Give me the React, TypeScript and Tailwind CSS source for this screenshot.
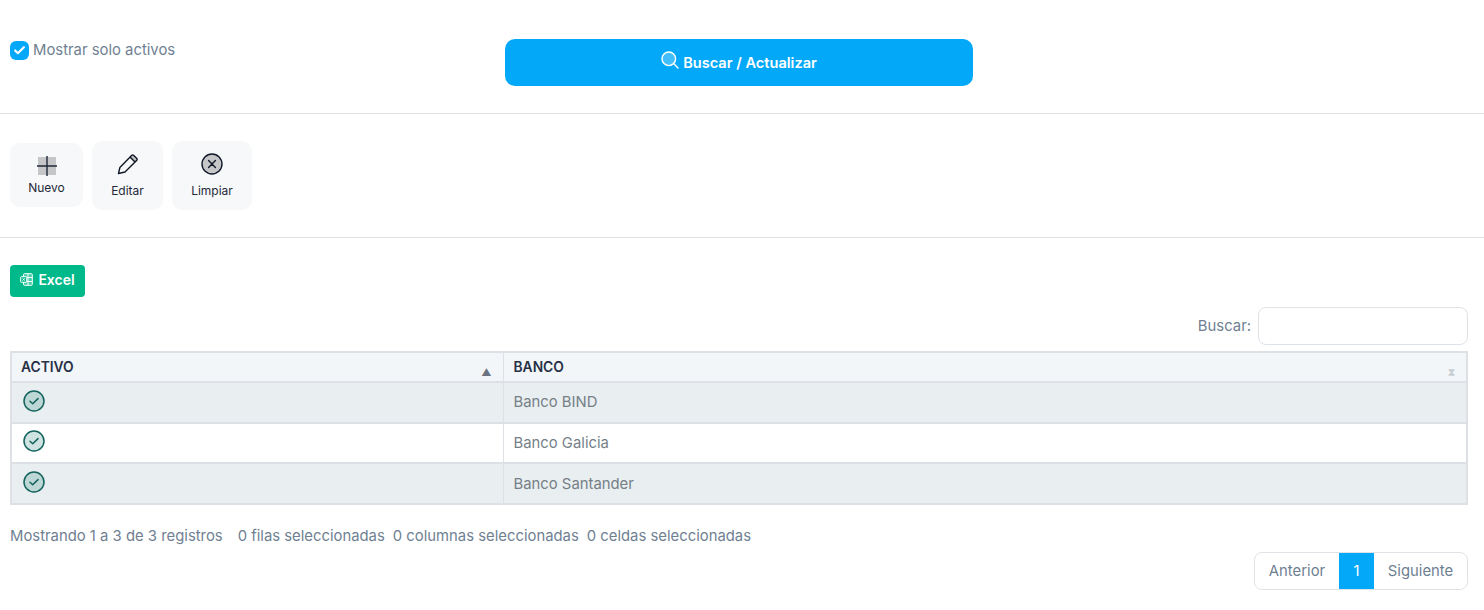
import React from "react"
import { Check } from "lucide-react"

const font = "font-['Inter','Liberation_Sans',sans-serif]"

const rows = ["Banco BIND", "Banco Galicia", "Banco Santander"]

// circulo con check de la columna ACTIVO
const ActiveIcon = () => (
  <svg width="22" height="22" viewBox="0 0 22 22" fill="none">
    <circle cx="11" cy="11" r="10" fill="#0f766e" fillOpacity="0.2" stroke="#14635c" strokeWidth="1.5" />
    <path d="M7 11.2l2.7 2.6L15 8.6" stroke="#14635c" strokeWidth="1.5" strokeLinecap="round" strokeLinejoin="round" />
  </svg>
)

const PlusIcon = () => (
  <svg width="20" height="20" viewBox="0 0 20 20" fill="none">
    <rect x="1" y="1" width="18" height="18" fill="#000" fillOpacity="0.2" />
    <path d="M10 0v20M0 10h20" stroke="#1f2937" strokeWidth="1.4" />
  </svg>
)

const PencilIcon = () => (
  <svg width="22" height="22" viewBox="0 0 22 22" fill="none">
    <path d="M1.5 20.5l1.4-6L14.8 2.2a1.2 1.2 0 0 1 1.7 0l3.3 3.3a1.2 1.2 0 0 1 0 1.7L8 19l-6.500 1.500z" stroke="#111827" strokeWidth="1.4" strokeLinejoin="round" />
    <path d="M13 4l5 5" stroke="#111827" strokeWidth="1.4" />
    <path d="M14.800 2.200a1.200 1.200 0 0 1 1.700 0l3.300 3.300a1.200 1.200 0 0 1 0 1.700L18 9l-5-5z" fill="#000" fillOpacity="0.2" />
  </svg>
)

const CancelIcon = () => (
  <svg width="22" height="22" viewBox="0 0 22 22" fill="none">
    <circle cx="11" cy="11" r="10" fill="#000" fillOpacity="0.2" stroke="#111827" strokeWidth="1.4" />
    <path d="M7.600 7.600l6.800 6.800M14.400 7.600l-6.800 6.800" stroke="#111827" strokeWidth="1.4" strokeLinecap="round" />
  </svg>
)

const SearchIcon = () => (
  <svg width="18" height="18" viewBox="0 0 18 18" fill="none">
    <circle cx="7.800" cy="7.800" r="6.800" fill="#fff" fillOpacity="0.25" stroke="#fff" strokeWidth="1.400" />
    <path d="M12.800 12.800L17 17" stroke="#fff" strokeWidth="1.400" strokeLinecap="round" />
  </svg>
)

const ExcelIcon = () => (
  <svg width="13" height="13" viewBox="0 0 13 13" fill="none">
    <rect x="3.500" y="0.700" width="8.800" height="11.600" rx="1" fill="#fff" fillOpacity="0.25" stroke="#fff" strokeWidth="1" />
    <path d="M3.500 4.500h8.800M3.500 8.500h8.800M8 0.700v11.600" stroke="#fff" strokeWidth="1" />
    <rect x="0.700" y="3.700" width="6" height="5.600" rx="0.600" fill="#00b98a" stroke="#fff" strokeWidth="1" />
    <path d="M2.600 5.300l2.200 2.400M4.800 5.300L2.600 7.700" stroke="#fff" strokeWidth="0.900" />
  </svg>
)

const ToolButton = ({ label, icon, className }: { label: string; icon: React.ReactNode; className: string }) => (
  <button className={`flex flex-col items-center rounded-[10px] bg-[#f6f8fa] text-[12px] leading-[16px] text-[#1f2937] ${className}`}>
    {icon}
    {label}
  </button>
)

export default function App() {
  return (
    <div className={`${font} h-[610px] w-[1484px] overflow-hidden bg-white text-[14.85px] text-[#6f7f92]`}>
      {/* filtros */}
      <div className="flex h-[114px] border-b border-[#e2e2e2] pl-[10px]">
        <label className="mt-[40px] flex h-[20px] w-[495px] items-center gap-[4px]">
          <span className="flex h-[19px] w-[19px] items-center justify-center rounded-[6px] bg-[#03a9f8]">
            <Check size={13} strokeWidth={4} color="#fff" />
          </span>
          <span>Mostrar solo activos</span>
        </label>
        <button className="mt-[39px] flex h-[47px] w-[468px] items-center justify-center gap-[4px] rounded-[10px] bg-[#03a9f8] pt-[2px] text-[14.6px] font-semibold text-white">
          <span className="-mt-[7px]"><SearchIcon /></span>
          Buscar / Actualizar
        </button>
      </div>

      {/* acciones */}
      <div className="flex h-[124px] items-start gap-[9px] border-b border-[#e2e2e2] pl-[10px] pt-[27px]">
        <ToolButton label="Nuevo" icon={<PlusIcon />} className="mt-[2px] h-[64px] w-[73px] gap-[4px] pt-[13px]" />
        <ToolButton label="Editar" icon={<PencilIcon />} className="h-[69px] w-[71px] gap-[8px] pt-[12px]" />
        <ToolButton label="Limpiar" icon={<CancelIcon />} className="h-[69px] w-[80px] gap-[8px] pt-[12px]" />
      </div>

      <div className="px-[10px] pr-[16px]">
        <button className="mt-[27px] flex h-[32px] w-[75px] items-center justify-center gap-[5px] rounded-[4px] bg-[#00b98a] pb-[3px] text-[14px] font-semibold text-white">
          <ExcelIcon />
          Excel
        </button>

        <div className="mt-[10px] flex h-[38px] items-center justify-end gap-[7px]">
          <span>Buscar:</span>
          <input className="h-[38px] w-[210px] rounded-[8px] border border-[#dfe3e8] bg-white" />
        </div>

        {/* tabla */}
        <table className="mt-[6px] w-[1458px] table-fixed border-collapse border-2 border-[#dde0e4]">
          <thead>
            <tr className="h-[30px] bg-[#f2f6f9] text-left text-[13.8px] font-semibold text-[#283046]">
              <th className="relative w-[492px] border-x border-y-2 border-[#dde0e4] px-[9px] font-semibold">
                ACTIVO
                <span className="absolute bottom-[2px] right-[11px] text-[10px] leading-[14px] text-[#6b7280]">▲</span>
              </th>
              <th className="relative border-x border-y-2 border-[#dde0e4] px-[10px] font-semibold">
                BANCO
                <span className="absolute bottom-[2px] right-[11px] text-[10px] leading-[14px] text-[#c9ced4]">⧗</span>
              </th>
            </tr>
          </thead>
          <tbody>
            {rows.map((name, i) => (
              <tr key={name} className={`${i === 1 ? "h-[40px]" : "h-[41px]"} ${i % 2 === 0 ? "bg-[#e9eef0]" : "bg-white"}`}>
                <td className="border-x border-y-2 border-[#dde0e4] pb-[4px] pl-[11px] align-middle">
                  <ActiveIcon />
                </td>
                <td className={`border-x border-y-2 border-[#dde0e4] px-[10px] text-[#757f87] ${i === 2 ? "pt-[2px]" : ""}`}>{name}</td>
              </tr>
            ))}
          </tbody>
        </table>

        <div className="mt-[21px] flex h-[20px] items-center whitespace-pre">
          <span>Mostrando 1 a 3 de 3 registros</span>
          <span className="ml-[15px]">0 filas seleccionadas</span>
          <span className="ml-[8px]">0 columnas seleccionadas</span>
          <span className="ml-[8px]">0 celdas seleccionadas</span>
        </div>

        <div className="mt-[6px] flex justify-end">
          <div className="flex h-[38px] overflow-hidden rounded-[8px] border border-[#dfe3e8]">
            <span className="flex w-[84px] items-center justify-center">Anterior</span>
            <span className="-my-px flex w-[35px] items-center justify-center bg-[#03a9f8] text-white">1</span>
            <span className="flex w-[93px] items-center justify-center">Siguiente</span>
          </div>
        </div>
      </div>
    </div>
  )
}
